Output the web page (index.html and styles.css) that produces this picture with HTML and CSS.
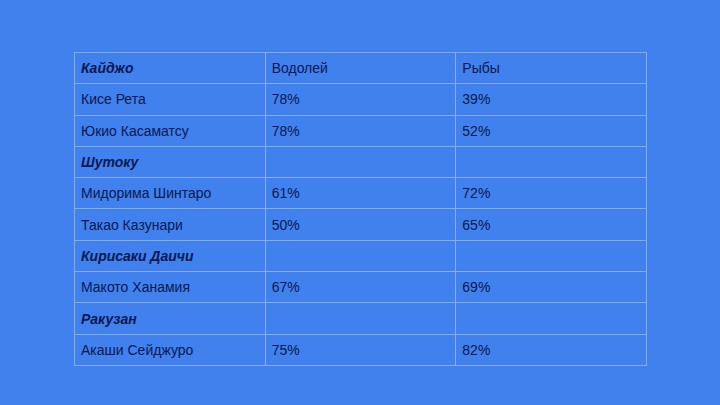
FILE: index.html
```html
<!DOCTYPE html>
<html lang="ru">
<head>
<meta charset="utf-8">
<link rel="stylesheet" href="styles.css">
</head>
<body>
<div class="page">
<table class="grid">
<tr><td class="group">Кайджо</td><td>Водолей</td><td>Рыбы</td></tr>
<tr><td>Кисе Рета</td><td>78%</td><td>39%</td></tr>
<tr><td>Юкио Касаматсу</td><td>78%</td><td>52%</td></tr>
<tr><td class="group">Шутоку</td><td></td><td></td></tr>
<tr><td>Мидорима Шинтаро</td><td>61%</td><td>72%</td></tr>
<tr><td>Такао Казунари</td><td>50%</td><td>65%</td></tr>
<tr><td class="group">Кирисаки Даичи</td><td></td><td></td></tr>
<tr><td>Макото Ханамия</td><td>67%</td><td>69%</td></tr>
<tr><td class="group">Ракузан</td><td></td><td></td></tr>
<tr><td>Акаши Сейджуро</td><td>75%</td><td>82%</td></tr>
</table>
</div>
</body>
</html>
```
FILE: styles.css
```css
html, body {
  margin: 0;
  padding: 0;
  background: #4081ee;
}
.page {
  width: 720px;
  height: 405px;
  padding: 52px 0 0 74px;
  box-sizing: border-box;
  font-family: "Liberation Sans", Arial, sans-serif;
}
.grid {
  border-collapse: collapse;
  width: 573px;
  table-layout: fixed;
  color: #0b1850;
  font-size: 14px;
}
.grid td {
  border: 1px solid #88abf0;
  height: 30.3px;
  padding: 0 0 0 6px;
  vertical-align: middle;
  width: 33.3%;
}
.grid td.group {
  font-weight: bold;
  font-style: italic;
}
```
